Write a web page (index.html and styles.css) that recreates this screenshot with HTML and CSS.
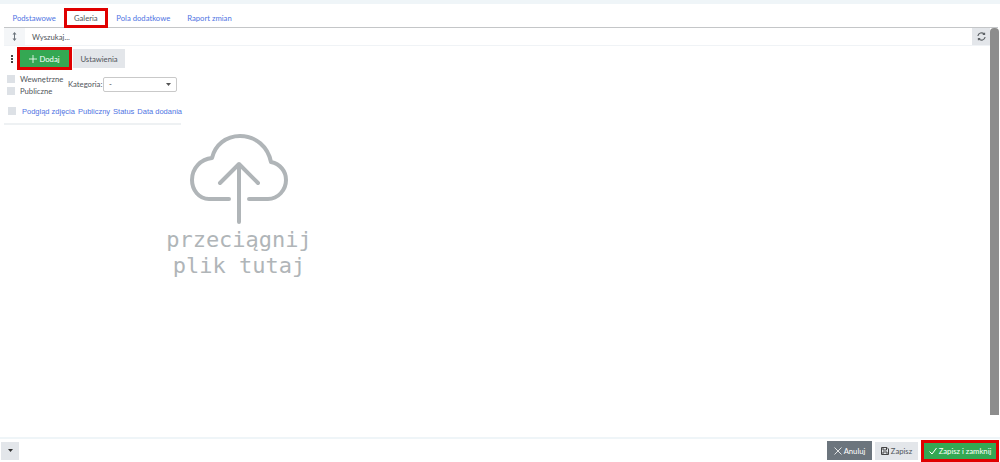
FILE: index.html
```html
<!DOCTYPE html>
<html lang="pl">
<head>
<meta charset="utf-8">
<title>Galeria</title>
<link rel="stylesheet" href="styles.css">
</head>
<body>
<div class="page">
  <div class="topband"></div>
  <nav class="tabs">
    <a class="tab">Podstawowe</a>
    <a class="tab active">Galeria</a>
    <a class="tab">Pola dodatkowe</a>
    <a class="tab">Raport zmian</a>
  </nav>
  <div class="body">
    <main class="content">
      <div class="search">
        <span class="sort"><svg width="5" height="9" viewBox="0 0 5 9"><path d="M2.500 0 4.500 2.500H3v4h1.500L2.500 9 .5 6.500H2v-4H.5z" fill="#6c757d"/></svg></span>
        <span class="search-text">Wyszukaj...</span>
        <span class="refresh"><svg width="9" height="9" viewBox="0 0 10 10" fill="none" stroke="#5f6468" stroke-width="1.300"><path d="M1 4.500A4 4 0 0 1 8 2.400M9 5.500A4 4 0 0 1 2 7.600"/><path d="M8.400.8v2H6.400M1.600 9.200v-2h2"/></svg></span>
      </div>
      <div class="toolbar">
        <span class="dots"><i></i><i></i><i></i></span>
        <button class="btn btn-add"><svg width="8" height="8" viewBox="0 0 8 8" stroke="#fff" stroke-width=".8"><path d="M4 0v8M0 4h8"/></svg>Dodaj</button>
        <button class="btn btn-settings">Ustawienia</button>
      </div>
      <div class="filters">
        <div class="checks">
          <label class="check"><span class="box"></span>Wewnętrzne</label>
          <label class="check"><span class="box"></span>Publiczne</label>
        </div>
        <span class="cat-label">Kategoria:</span>
        <span class="select">-<svg width="5" height="3" viewBox="0 0 5 3"><path d="M0 0h5L2.500 3z" fill="#555"/></svg></span>
      </div>
      <div class="thead">
        <span class="box"></span>
        <a>Podgląd zdjęcia</a><a>Publiczny</a><a>Status</a><a>Data dodania</a>
      </div>
      <div class="drop">
        <svg class="cloud" width="102" height="93" viewBox="0 0 102 93" fill="none" stroke="#b0b5b8" stroke-width="4" stroke-linecap="round" stroke-linejoin="round">
          <path d="M41 67H21C11 67 4 58 4 48C4 36 13 27 24 26C27 13 38 4 52 4C68 4 80 15 83 30C92 32 98 39 98 48C98 58 90 67 80 67H61"/>
          <path d="M51 90V32M32 51 51 32 70 51"/>
        </svg>
        <div class="drop-text">przeciągnij<br>plik tutaj</div>
      </div>
    </main>
    <div class="scrollbar"><div class="thumb"></div></div>
  </div>
  <footer class="footer">
    <button class="btn btn-more"><svg width="5" height="3" viewBox="0 0 5 3"><path d="M0 0h5L2.500 3z" fill="#333"/></svg></button>
    <div class="actions">
      <button class="btn btn-cancel"><svg width="8" height="8" viewBox="0 0 8 8" stroke="#fff" stroke-width=".8"><path d="M.5.5l7 7M7.500.5l-7 7"/></svg>Anuluj</button>
      <button class="btn btn-save"><svg width="8" height="8" viewBox="0 0 8 8" fill="none" stroke="#444" stroke-width="1"><path d="M.5.5h5.500l1.500 1.500v5.500h-7zM2 .5v2.500h3.500V.5M2 7.500V5h4v2.500"/></svg>Zapisz</button>
      <button class="btn btn-close"><svg width="8" height="8" viewBox="0 0 8 8" fill="none" stroke="#fff" stroke-width="1"><path d="M.5 4.500 3 7 7.500 1"/></svg>Zapisz i zamknij</button>
    </div>
  </footer>
</div>
</body>
</html>
```
FILE: styles.css
```css
* { box-sizing: border-box; }
html, body { margin: 0; height: 100%; overflow: hidden; background: #fff; }
body { font-family: "Lato", "Noto Sans", sans-serif; font-size: 7.700px; color: #50555a; }
.page { height: 462px; display: flex; flex-direction: column; }
.topband { height: 4px; background: #eff5f8; flex: none; }
.tabs { flex: none; height: 24px; margin: 0 2px 0 4px; padding-top: 5px; display: flex; border-bottom: 1px solid #c4c6c8; }
.tab { color: #4f74e3; padding: 0 8.500px; line-height: 18px; }
.tab.active { color: #50555a; outline: 3px solid #e00000; outline-offset: -3px; height: 20px; width: 44px; padding: 0; text-align: center; margin: -1px 0 0 -.5px; line-height: 20px; }
.body { flex: 1; min-height: 0; display: flex; }
.content { flex: 1; min-width: 0; padding-left: 4px; }
.scrollbar { flex: none; width: 11px; padding-right: 1px; }
.thumb { width: 9px; height: 387px; background: #8d8d8d; border-radius: 4px 4px 0 0; margin-left: 1px; }
.search { height: 18px; display: flex; align-items: center; border-bottom: 1px solid #f0f3f6; margin-right: -1px; }
.sort { width: 21px; height: 17px; background: #f4f6f8; display: flex; align-items: center; justify-content: center; }
.search-text { flex: 1; padding-left: 7px; }
.refresh { width: 18px; height: 17px; background: #e3e6ea; display: flex; align-items: center; justify-content: center; }
.toolbar { height: 25px; display: flex; align-items: center; padding-left: 7px; }
.dots { display: flex; flex-direction: column; gap: 1px; width: 2px; margin-right: 4px; }
.dots i { width: 2px; height: 2px; background: #444; display: block; }
.btn { border: 0; padding: 0; font: inherit; display: inline-flex; align-items: center; justify-content: center; gap: 2px; }
.btn-add { width: 55px; height: 23px; background: #34a853; color: #fff; outline: 3px solid #e00000; outline-offset: -3px; }
.btn-settings { width: 52px; height: 19px; background: #e3e6ea; color: #50555a; margin-left: 1px; }
.filters { height: 27px; padding-left: 3px; display: flex; align-items: center; }
.checks { display: flex; flex-direction: column; gap: 2px; width: 61px; margin-top: 1px; }
.check { display: flex; align-items: center; gap: 5px; height: 10px; }
.box { display: block; width: 8px; height: 8px; background: #dde1e6; flex: none; }
.cat-label { width: 35px; margin-top: -2px; }
.select { width: 74px; height: 15px; margin-top: -1px; border: 1px solid #c9c9c9; border-radius: 2px; display: flex; align-items: center; justify-content: space-between; padding: 0 5px; color: #444; }
.thead { width: 177px; height: 23px; margin-top: 4px; display: flex; align-items: center; gap: 3px; padding: 0 0 3px 4px; border-bottom: 2px solid #eef1f3; }
.thead .box { margin-right: 3px; }
.thead a { font-family: "Liberation Sans", sans-serif; color: #4f74e3; font-size: 7.500px; white-space: nowrap; }
.drop { width: 150px; margin-left: 160px; margin-top: 7px; display: flex; flex-direction: column; align-items: center; }
.cloud { flex: none; }
.drop-text { font-family: "DejaVu Sans Mono", monospace; font-size: 22px; line-height: 26px; color: #b0b5b8; text-align: center; margin-top: 2px; }
.footer { flex: none; height: 25px; border-top: 2px solid #eff5f8; display: flex; align-items: center; justify-content: space-between; padding: 0 1px; }
.btn-more { width: 18px; height: 18px; background: #e3e6ea; }
.actions { display: flex; align-items: center; gap: 3px; }
.btn-cancel { width: 45px; height: 19px; background: #6c757d; color: #fff; }
.btn-save { width: 43px; height: 18px; background: #e3e6ea; color: #50555a; }
.btn-close { width: 78px; height: 22px; background: #34a853; color: #fff; outline: 3px solid #e00000; outline-offset: -3px; }
```
